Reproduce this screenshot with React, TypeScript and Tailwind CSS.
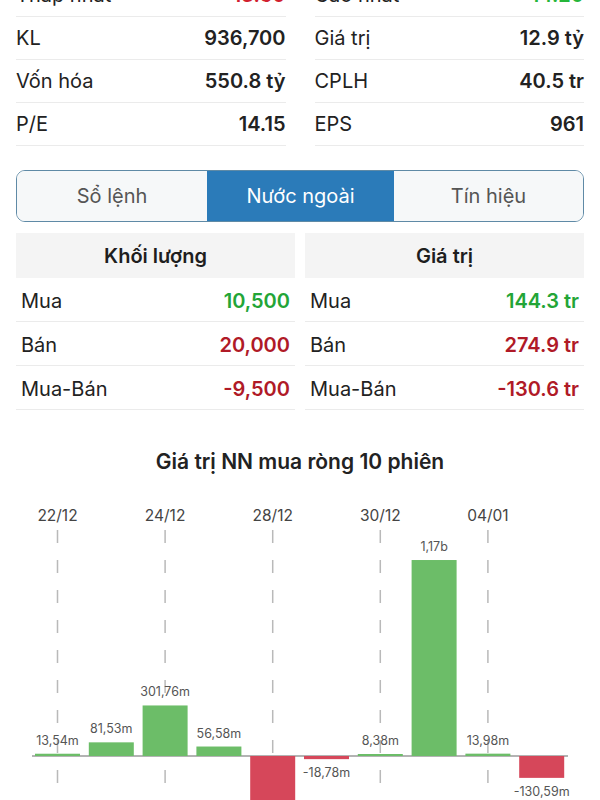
import React from 'react';

const FONT = { fontFamily: 'Inter, "Noto Sans", "Liberation Sans", sans-serif' };

type Stat = { label: string; value: string; color?: string };

const leftStats: Stat[] = [
  { label: 'Thấp nhất', value: '13.50', color: 'text-[#d1202f]' },
  { label: 'KL', value: '936,700' },
  { label: 'Vốn hóa', value: '550.8 tỷ' },
  { label: 'P/E', value: '14.15' },
];

const rightStats: Stat[] = [
  { label: 'Cao nhất', value: '14.20', color: 'text-[#26b63a]' },
  { label: 'Giá trị', value: '12.9 tỷ' },
  { label: 'CPLH', value: '40.5 tr' },
  { label: 'EPS', value: '961' },
];

const StatColumn = ({ items }: { items: Stat[] }) => (
  <div className="flex flex-col">
    {items.map((s) => (
      <div key={s.label} className="flex h-[43px] items-center justify-between border-b border-[#ebebeb] text-[20px]">
        <span className="text-[#222]">{s.label}</span>
        <span className={`font-semibold ${s.color ?? 'text-[#222]'}`}>{s.value}</span>
      </div>
    ))}
  </div>
);

const tradeLeft: Stat[] = [
  { label: 'Mua', value: '10,500', color: 'text-[#23a537]' },
  { label: 'Bán', value: '20,000', color: 'text-[#b01a27]' },
  { label: 'Mua-Bán', value: '-9,500', color: 'text-[#b01a27]' },
];

const tradeRight: Stat[] = [
  { label: 'Mua', value: '144.3 tr', color: 'text-[#23a537]' },
  { label: 'Bán', value: '274.9 tr', color: 'text-[#b01a27]' },
  { label: 'Mua-Bán', value: '-130.6 tr', color: 'text-[#b01a27]' },
];

const TradeTable = ({ title, rows }: { title: string; rows: Stat[] }) => (
  <div className="flex flex-col">
    <div className="flex h-[45px] items-center justify-center bg-[#f4f4f4] text-[20px] font-semibold text-[#1e1e1e]">
      {title}
    </div>
    {rows.map((r) => (
      <div key={r.label} className="flex h-[44px] items-center justify-between border-b border-[#ebebeb] px-[5px] pt-[3px] text-[20px]">
        <span className="text-[#222]">{r.label}</span>
        <span className={`font-semibold ${r.color}`}>{r.value}</span>
      </div>
    ))}
  </div>
);

// net foreign buy value per session, in millions
const sessions = [
  { v: 13.54, label: '13,54m', date: '22/12' },
  { v: 81.53, label: '81,53m' },
  { v: 301.76, label: '301,76m', date: '24/12' },
  { v: 56.58, label: '56,58m' },
  { v: -340, label: '-340,12m', date: '28/12' },
  { v: -18.78, label: '-18,78m' },
  { v: 8.38, label: '8,38m', date: '30/12' },
  { v: 1170, label: '1,17b' },
  { v: 13.98, label: '13,98m', date: '04/01' },
  { v: -130.59, label: '-130,59m' },
];

const NetBuyChart = () => {
  const base = 756;
  const scale = 0.1675;
  const barW = 45;
  return (
    <svg width={600} height={326} viewBox="0 474 600 326" className="block">
      {sessions.map((s, i) => {
        if (!s.date) return null;
        const cx = 57.5 + 53.8 * i;
        return (
          <g key={'d' + i}>
            <text x={cx} y={521} textAnchor="middle" fontSize={15.5} fill="#444" style={FONT}>
              {s.date}
            </text>
            <line x1={cx} y1={530} x2={cx} y2={810} stroke="#b9b9b9" strokeWidth={1.5} strokeDasharray="13 17" />
          </g>
        );
      })}
      <line x1={32} y1={base} x2={568} y2={base} stroke="#9a9a9a" strokeWidth={1.5} />
      {sessions.map((s, i) => {
        const cx = 57.5 + 53.8 * i;
        const h = Math.max(2, Math.abs(s.v) * scale);
        const pos = s.v >= 0;
        const y = pos ? base - h : base;
        return (
          <g key={'b' + i}>
            <rect x={cx - barW / 2} y={y} width={barW} height={h} fill={pos ? '#6cbd68' : '#d6475a'} />
            <text
              x={cx}
              y={pos ? y - 9 : y + h + 18}
              textAnchor="middle"
              fontSize={12.5}
              fill="#555"
              style={FONT}
            >
              {s.label}
            </text>
          </g>
        );
      })}
    </svg>
  );
};

export default function App() {
  return (
    <div className="h-[800px] w-[600px] overflow-hidden bg-white" style={FONT}>
      <div className="-mt-[26px] grid grid-cols-2 gap-[29px] px-4">
        <StatColumn items={leftStats} />
        <StatColumn items={rightStats} />
      </div>

      <div className="mx-4 mt-[24px] flex h-[52px] overflow-hidden rounded-[9px] border-[1.5px] border-[#5f8aa6] text-[20px]">
        <div className="flex w-[190px] items-center justify-center bg-[#f6f8f9] text-[#555]">Sổ lệnh</div>
        <div className="flex flex-1 items-center justify-center bg-[#2b7bb9] text-white">Nước ngoài</div>
        <div className="flex w-[189px] items-center justify-center bg-[#f6f8f9] text-[#555]">Tín hiệu</div>
      </div>

      <div className="mt-[11px] grid grid-cols-2 gap-[10px] px-4">
        <TradeTable title="Khối lượng" rows={tradeLeft} />
        <TradeTable title="Giá trị" rows={tradeRight} />
      </div>

      <div className="mt-[40px] text-center text-[21px] leading-[24px] font-semibold text-[#222]">
        Giá trị NN mua ròng 10 phiên
      </div>

      <NetBuyChart />
    </div>
  );
}
